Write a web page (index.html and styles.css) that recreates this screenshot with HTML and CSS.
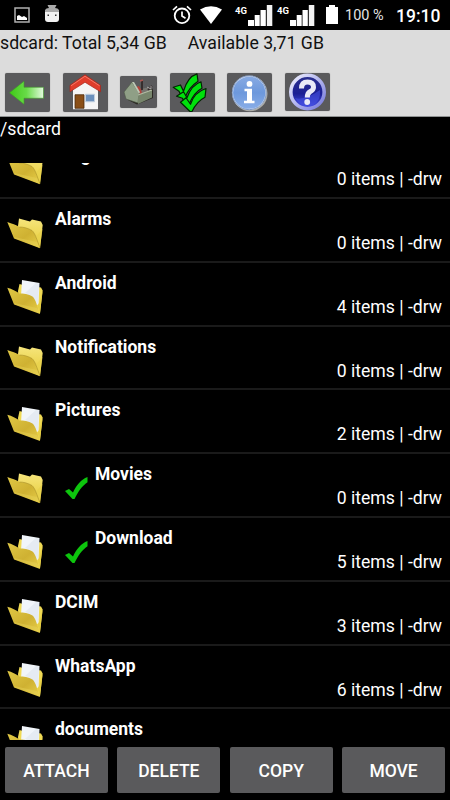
FILE: index.html
```html
<!DOCTYPE html>
<html lang="en">
<head>
  <meta charset="UTF-8">
  <title>File manager</title>
  <link rel="stylesheet" href="styles.css">
</head>
<body>

<!-- shared icons -->
<svg class="defs" width="0" height="0">
  <defs>
    <linearGradient id="gFront" x1="0" y1="0" x2="1" y2="1">
      <stop offset="0" stop-color="#e0c845"/>
      <stop offset=".55" stop-color="#cfb132"/>
      <stop offset="1" stop-color="#e8d04a"/>
    </linearGradient>
    <linearGradient id="gBack" x1="0" y1="0" x2="0" y2="1">
      <stop offset="0" stop-color="#f6e57c"/>
      <stop offset="1" stop-color="#e6cb35"/>
    </linearGradient>
    <linearGradient id="gArrow" x1="0" y1="0" x2="1" y2="0">
      <stop offset="0" stop-color="#3fc916"/>
      <stop offset=".5" stop-color="#68db48"/>
      <stop offset="1" stop-color="#e4fadf"/>
    </linearGradient>
    <linearGradient id="gInfo" x1="0" y1="0" x2="0" y2="1">
      <stop offset="0" stop-color="#89abe3"/>
      <stop offset=".5" stop-color="#6d98dc"/>
      <stop offset="1" stop-color="#8aaee8"/>
    </linearGradient>
    <linearGradient id="gHelp" x1="0" y1="0" x2="0" y2="1">
      <stop offset="0" stop-color="#2a2f8d"/>
      <stop offset=".55" stop-color="#1b1f94"/>
      <stop offset="1" stop-color="#4b55ee"/>
    </linearGradient>
    <linearGradient id="gRing" x1="0" y1="0" x2="1" y2="1">
      <stop offset="0" stop-color="#f0f1ff"/>
      <stop offset="1" stop-color="#7478dc"/>
    </linearGradient>
    <symbol id="folder" viewBox="0 0 38 38">
      <path d="M13 12L14 4.500L25 7.500L27 5.500L36 7.500L37.700 11L35 34L14 24Z" fill="url(#gBack)"/>
      <path d="M2.300 8C7 9.500 11 11 14.500 13C18 13 23 14 27 16.500C30 19 32 26 35 34.300L9 24.500Z" fill="url(#gFront)"/>
      <path d="M27 16.500C30 19 32 26 35 34L37.500 15L31.500 22Z" fill="#e8d24e" opacity=".8"/>
      <path d="M14.500 13C18 13 23 14 27 16.500C30 19 32 26 35 34" fill="none" stroke="#9c8524" stroke-width=".5"/>
      <path d="M9 23L32 28L34.500 33.500L10 24.500Z" fill="#e9d45b" opacity=".4"/>
    </symbol>
    <symbol id="folder-full" viewBox="0 0 38 38">
      <path d="M13 13L14.500 6L18 7L36 9.500L37.700 12.500L35 35.500L14 25Z" fill="#f0da55"/>
      <path d="M17 2L34.500 5L33.500 26L30.500 28L16 18Z" fill="#f1f5fa"/>
      <path d="M20 15L31 5L34 5.500L33 25L31 27L27 18Z" fill="#dfe7ef" opacity=".7"/>
      <path d="M2.300 9.700C7 11 11 13 14.500 15.500C18 15.500 24 16 27.500 18.500C31 21.500 32 28 35 36L9 26.500Z" fill="url(#gFront)"/>
      <path d="M9 25L32 30L34.500 35L10 26.500Z" fill="#e9d45b" opacity=".4"/>
      <path d="M35 35L37.500 13L34.500 24L32.500 28Z" fill="#e6ce43"/>
    </symbol>
    <symbol id="check" viewBox="0 0 24 24">
      <path d="M0 15L4 13L8 16.500C11.500 9 16 3.500 22.500 1V6.300C17 10 13 16 9.500 23H7.500Z" fill="#0dc50d"/>
    </symbol>
    <symbol id="signal" viewBox="0 0 25 22">
      <path d="M0 16h6v6H0zM6.700 11h5v11h-5zM12.500 6h5.300v16h-5.300z" fill="#fff"/>
      <path d="M18.800 1h5.500v21h-5.500z" fill="#f2f2f2"/>
    </symbol>
  </defs>
</svg>

<div class="statusbar">
  <svg class="st-photo" viewBox="0 0 16 16"><path d="M1 1h14v14H1z" fill="none" stroke="#b0b0b0" stroke-width="1.500"/><path d="M3 13V9l2-1 3 2 2-1 3 2v2z" fill="#fff"/></svg>
  <svg class="st-droid" viewBox="0 0 16 18"><path d="M3.500 0L5 3h6l1.500-3M1 7V5q1-2 4-2h6q3 0 4 2v2z" fill="#aaa"/><path d="M1 7h14v7q0 3-3 3H4q-3 0-3-3z" fill="#f2f2f2"/><path d="M3.500 9.500H5V11H3.500zM11 9.500h1.500V11H11z" fill="#333"/></svg>
  <svg class="st-alarm" viewBox="0 0 20 20"><circle cx="10" cy="10.800" r="7.300" fill="none" stroke="#fff" stroke-width="1.800"/><path d="M10 6.500V11l3.500 2.200M1 5l4-3.700M19 5l-4-3.700" fill="none" stroke="#fff" stroke-width="1.700"/></svg>
  <svg class="st-wifi" viewBox="0 0 22 18"><path d="M0 3.500Q11-3 22 3.500L11 18z" fill="#fff"/></svg>
  <span class="net">4G</span>
  <svg class="st-signal"><use href="#signal"/></svg>
  <span class="net net2">4G</span>
  <svg class="st-signal"><use href="#signal"/></svg>
  <svg class="st-battery" viewBox="0 0 12 19"><path d="M0 2h3V0h6v2h3v17H0z" fill="#fff"/></svg>
  <span class="percent">100 %</span>
  <span class="clock">19:10</span>
</div>

<div class="header">
  <div class="space"><span>sdcard: Total 5,34 GB</span><span>Available 3,71 GB</span></div>
  <div class="toolbar">
    <button class="tool">
      <svg viewBox="0 0 45 39"><path d="M4.500 19.500L19 8v6h19.500v11H19v6z" fill="url(#gArrow)" stroke="#3d9a27" stroke-width=".6"/></svg>
    </button>
    <button class="tool">
      <svg viewBox="0 0 45 39">
        <path d="M10 14L22 5l13 9v22H10z" fill="#f5f5f5"/>
        <path d="M12 21.500h9V35h-9z" fill="#8a4f17" stroke="#4d2b0c" stroke-width=".8"/>
        <path d="M22.500 21h9v7.500h-9z" fill="#6c91bd" stroke="#c2d0df"/>
        <path d="M7 12L22 1.500L37.500 12v6.500L22 9L7 18.500z" fill="#e03d2c" stroke="#a8251a" stroke-width=".7"/>
        <path d="M8 12.500L22 3L36.500 12.500" fill="none" stroke="#f47a68" stroke-width="1"/>
      </svg>
    </button>
    <button class="tool small">
      <svg viewBox="0 0 37 32">
        <path d="M14 17L31 10L33 14V22L17 28.500L8 24z" fill="#2b2823"/>
        <path d="M16 11l3-1 4 7-3 2z" fill="#b3423b"/>
        <path d="M21 13l8-2 2-1-1 5-8 3z" fill="#777570"/>
        <path d="M22 4v10M28 14l4-4" stroke="#332929" stroke-width="1.800"/>
        <path d="M20 5l3-1" stroke="#aa5550" stroke-width="1.500"/>
        <path d="M27 11l4 2v-3" fill="none" stroke="#aaa" stroke-width="1"/>
        <path d="M4 16L12 6l7 11-1 10-12-4z" fill="#8f9f86" stroke="#4c5844" stroke-width=".6"/>
        <path d="M12 6l2 0 6 10-1 2z" fill="#bec8b5"/>
        <path d="M18 19L32 14v7.500L18 28z" fill="#77856c"/>
        <path d="M18 19L32 14" stroke="#b2bda4" stroke-width="1.200"/>
      </svg>
    </button>
    <button class="tool">
      <svg viewBox="0 0 45 39">
        <g fill="#00e10c" stroke="#032403" stroke-width="1.200" stroke-linejoin="round">
          <path d="M3.200 14L10.500 11.700L13.500 18C16 9 21 2.500 27 .6L28 8C22 12 18 17 15 24L10.500 21L9 18z"/>
          <path d="M6.500 23L13.500 18.500L17 24.500C20 16 25 10.500 31 8.500L32 15C26 18 22 24 19 31L14 28.500L12.500 25z"/>
          <path d="M10.500 29L16 24.500L20.500 31C23 23 29 17.500 36 15.300L35 24C29 27 25 32 22 38.300H20z"/>
        </g>
      </svg>
    </button>
    <button class="tool">
      <svg viewBox="0 0 45 39">
        <circle cx="23" cy="20.500" r="17.500" fill="#acaca7"/>
        <circle cx="22.200" cy="19.500" r="16.700" fill="url(#gInfo)" stroke="#e4ebf7" stroke-width="1.200"/>
        <circle cx="22.200" cy="19.500" r="16.900" fill="none" stroke="#4064a2" stroke-width=".6"/>
        <circle cx="22.500" cy="10.700" r="2.900" fill="#fff"/>
        <path d="M17.500 15.500h7.500v12h2.500V30H17v-2.500h3V18h-2.500z" fill="#fff"/>
      </svg>
    </button>
    <button class="tool help">
      <svg viewBox="0 0 45 38">
        <circle cx="22.500" cy="19" r="16.700" fill="url(#gHelp)" stroke="url(#gRing)" stroke-width="3.600"/>
        <path d="M10 25Q19 28 35 17Q36 28 28 32Q17 36 10 25z" fill="#4450e2" opacity=".6"/>
        <path d="M16.500 15.500Q16.500 9 22.500 9Q28.500 9 28.500 14.300Q28.500 17 25 18.800Q22.300 20.300 22.300 24.500" fill="none" stroke="#e9eaf7" stroke-width="5"/>
        <circle cx="22.200" cy="29" r="2.900" fill="#e9eaf7"/>
      </svg>
    </button>
  </div>
</div>

<div class="path">/sdcard</div>

<div class="list">
  <div class="row">
    <svg class="icon"><use href="#folder"/></svg>
    <span class="name">Ringtones</span>
    <span class="meta">0 items | -drw</span>
  </div>
  <div class="row">
    <svg class="icon"><use href="#folder"/></svg>
    <span class="name">Alarms</span>
    <span class="meta">0 items | -drw</span>
  </div>
  <div class="row">
    <svg class="icon"><use href="#folder-full"/></svg>
    <span class="name">Android</span>
    <span class="meta">4 items | -drw</span>
  </div>
  <div class="row">
    <svg class="icon"><use href="#folder"/></svg>
    <span class="name">Notifications</span>
    <span class="meta">0 items | -drw</span>
  </div>
  <div class="row">
    <svg class="icon"><use href="#folder-full"/></svg>
    <span class="name">Pictures</span>
    <span class="meta">2 items | -drw</span>
  </div>
  <div class="row">
    <svg class="icon"><use href="#folder"/></svg>
    <svg class="check"><use href="#check"/></svg>
    <span class="name">Movies</span>
    <span class="meta">0 items | -drw</span>
  </div>
  <div class="row">
    <svg class="icon"><use href="#folder-full"/></svg>
    <svg class="check"><use href="#check"/></svg>
    <span class="name">Download</span>
    <span class="meta">5 items | -drw</span>
  </div>
  <div class="row">
    <svg class="icon"><use href="#folder-full"/></svg>
    <span class="name">DCIM</span>
    <span class="meta">3 items | -drw</span>
  </div>
  <div class="row">
    <svg class="icon"><use href="#folder-full"/></svg>
    <span class="name">WhatsApp</span>
    <span class="meta">6 items | -drw</span>
  </div>
  <div class="row">
    <svg class="icon"><use href="#folder-full"/></svg>
    <span class="name">documents</span>
  </div>
</div>

<div class="actions">
  <button>ATTACH</button>
  <button>DELETE</button>
  <button>COPY</button>
  <button>MOVE</button>
</div>

</body>
</html>
```
FILE: styles.css
```css
* {
  box-sizing: border-box;
}

body {
  margin: 0;
  width: 450px;
  height: 800px;
  display: flex;
  flex-direction: column;
  overflow: hidden;
  background: #000;
  color: #fff;
  font-family: Roboto, sans-serif;
  font-size: 17.5px;
}

svg {
  display: block;
  flex: none;
}

.defs {
  height: 0;
}

button {
  border: none;
  padding: 0;
  background: #5a5a5c;
  color: #fff;
  font-family: inherit;
  border-radius: 2px;
}

/* status bar */
.statusbar {
  height: 30px;
  flex: none;
  display: flex;
  align-items: flex-start;
}

.st-photo {
  width: 16px;
  height: 16px;
  margin: 7px 0 0 14px;
}

.st-droid {
  width: 16px;
  height: 18px;
  margin: 5px 0 0 14px;
}

.st-alarm {
  width: 20px;
  height: 20px;
  margin: 5px 0 0 112px;
}

.st-wifi {
  width: 22px;
  height: 18px;
  margin: 6px 0 0 8px;
}

.net {
  width: 13px;
  margin: 5px 0 0 13px;
  font-size: 9.5px;
  font-weight: bold;
  line-height: 12px;
}

.net2 {
  margin-left: 4px;
}

.st-signal {
  width: 25px;
  height: 22px;
  margin-top: 4px;
}

.st-battery {
  width: 12px;
  height: 19px;
  margin: 5px 0 0 11px;
}

.percent {
  width: 51px;
  margin: 6px 0 0 7px;
  font-size: 14.5px;
  line-height: 20px;
  color: #e4e4e4;
}

.clock {
  font-size: 17.5px;
  font-weight: 500;
  line-height: 24px;
  margin-top: 4px;
}

/* header */
.header {
  height: 87px;
  flex: none;
  background: #dcdcdc;
  border-bottom: 1px solid #8f9292;
  color: #111;
}

.space {
  display: flex;
  gap: 21px;
  height: 42.5px;
  font-size: 17.7px;
  line-height: 26px;
}

.toolbar {
  display: flex;
  align-items: center;
  gap: 12.6px;
  padding-left: 5px;
}

.tool {
  width: 45px;
  height: 39.5px;
  box-shadow: 0 0 1px #777;
}

.tool svg {
  width: 100%;
  height: 100%;
}

.tool.small {
  width: 37px;
  height: 32px;
}

.tool.help {
  height: 38px;
}

.path {
  height: 46px;
  flex: none;
  font-size: 17.7px;
  line-height: 24px;
}

/* file list */
.list {
  height: 577px;
  flex: none;
  overflow: hidden;
}

.row {
  display: flex;
  height: 63.8px;
  padding: 0 8px 0 5px;
  border-bottom: 2px solid #1a1a1a;
}

.row:first-child {
  margin-top: -27.8px;
}

.icon {
  width: 38px;
  height: 38px;
  margin-top: 15px;
}

.name {
  margin: 9px 0 0 12px;
  font-weight: bold;
  line-height: 22px;
}

.check {
  width: 24px;
  height: 24px;
  margin: 22px 0 0 22px;
}

.check + .name {
  margin-left: 6px;
}

.meta {
  margin: 32px 0 0 auto;
  font-size: 17.6px;
  line-height: 24px;
}

/* bottom buttons */
.actions {
  display: flex;
  gap: 9.5px;
  padding: 7px 5px;
}

.actions button {
  flex: 1;
  height: 45.5px;
  padding-top: 2px;
  font-size: 17.5px;
  font-weight: 500;
}
```
